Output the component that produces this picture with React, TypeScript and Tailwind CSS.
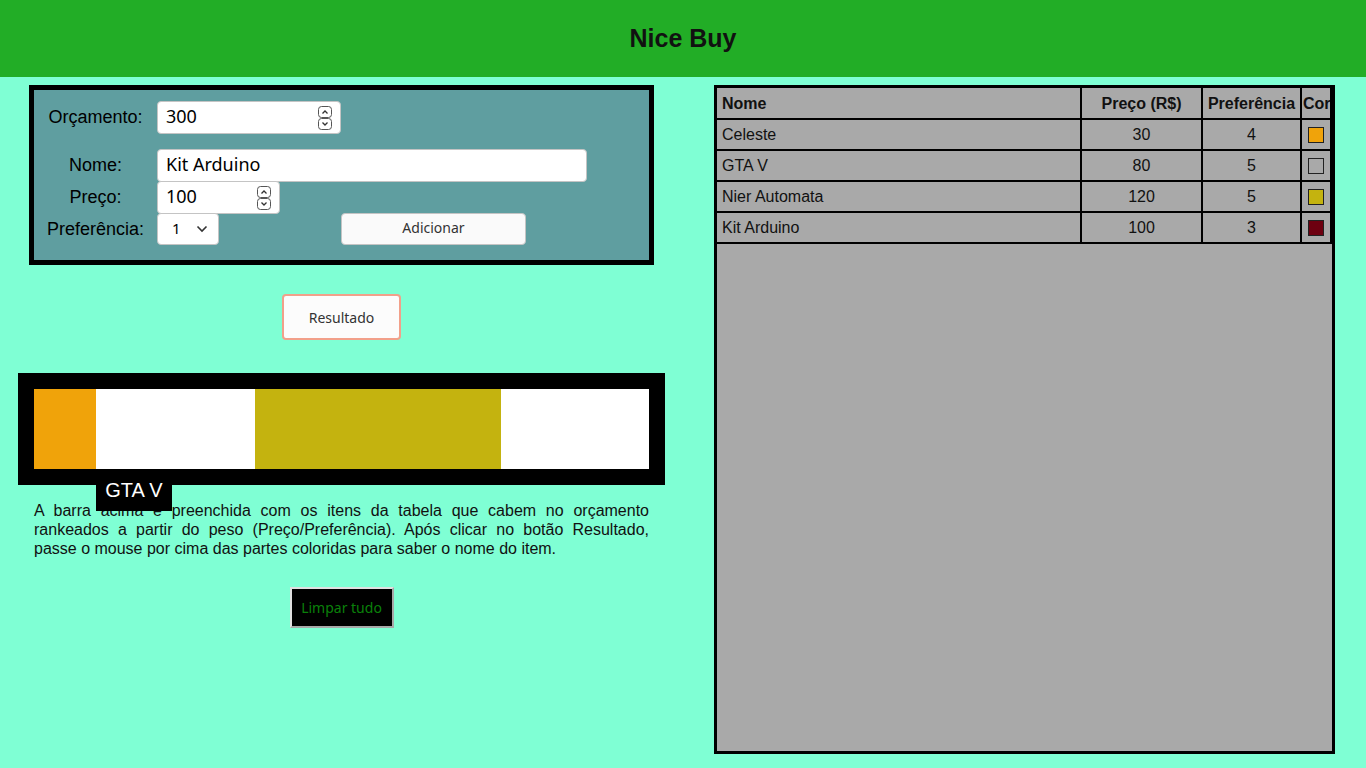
import React from "react";

const Spinner = () => (
  <svg width="14" height="24" viewBox="0 0 14 24" className="absolute top-1/2 -translate-y-1/2" style={{ right: 9 }}>
    <rect x="0.5" y="0.5" width="13" height="11" rx="3" fill="#fff" stroke="#555" />
    <rect x="0.5" y="12.5" width="13" height="11" rx="3" fill="#fff" stroke="#555" />
    <path d="M4.5 7.5 L7 5 L9.5 7.5" fill="none" stroke="#333" strokeWidth="1.3" />
    <path d="M4.5 16.5 L7 19 L9.5 16.5" fill="none" stroke="#333" strokeWidth="1.3" />
  </svg>
);

const inputCls =
  "h-full w-full rounded-[4px] border border-[#c4c4c4] bg-white pl-[8px] pb-[4px] text-[18px] text-black outline-none";

const rows = [
  { nome: "Celeste", preco: "30", pref: "4", cor: "#f0a30a" },
  { nome: "GTA V", preco: "80", pref: "5", cor: "transparent" },
  { nome: "Nier Automata", preco: "120", pref: "5", cor: "#c4b30f" },
  { nome: "Kit Arduino", preco: "100", pref: "3", cor: "#6d0010" },
];

export default function App() {
  const ui = { fontFamily: '"Noto Sans", "Open Sans", sans-serif' };
  return (
    <div className="min-h-[768px] w-[1366px] bg-[#7fffd4] text-black" style={{ fontFamily: '"Liberation Sans", Arial, sans-serif' }}>
      <header className="flex h-[77px] items-center justify-center bg-[#22ad26]">
        <h1 className="text-[25px] font-bold text-[#111]">Nice Buy</h1>
      </header>
      <main className="flex">
        {/* Left column */}
        <section className="flex w-[683px] flex-col items-center pt-[8px]">
          <div className="h-[180px] w-[625px] border-[5px] border-black bg-[#5f9ea0] pt-[11px] text-[18px]">
            <div className="flex h-[33px] items-center">
              <label className="w-[123px] text-center">Orçamento:</label>
              <div className="relative h-full w-[184px]">
                <input readOnly value="300" className={inputCls} style={ui} />
                <Spinner />
              </div>
            </div>
            <div className="mt-[15px] flex h-[33px] items-center">
              <label className="w-[123px] text-center">Nome:</label>
              <div className="h-full w-[430px]">
                <input readOnly value="Kit Arduino" className={inputCls} style={ui} />
              </div>
            </div>
            <div className="mt-[-1px] flex h-[33px] items-center">
              <label className="w-[123px] text-center">Preço:</label>
              <div className="relative h-full w-[123px]">
                <input readOnly value="100" className={inputCls} style={ui} />
                <Spinner />
              </div>
            </div>
            <div className="mt-[-1px] flex h-[32px] items-center">
              <label className="w-[123px] text-center">Preferência:</label>
              <div className="relative flex h-full w-[62px] items-center rounded-[4px] border border-[#c4c4c4] bg-white pb-[2px] pl-[14px] text-[15px]" style={ui}>
                <span>1</span>
                <svg width="12" height="8" viewBox="0 0 12 8" className="absolute left-[38px] top-[11px]">
                  <path d="M1.5 1.5 L6 6 L10.5 1.5" fill="none" stroke="#333" strokeWidth="1.6" />
                </svg>
              </div>
              <button className="ml-[122px] h-full w-[185px] rounded-[4px] border border-[#c4c4c4] bg-[#fafafa] pb-[3px] text-[14px] text-[#333]" style={ui}>
                Adicionar
              </button>
            </div>
          </div>

          <button className="mt-[29px] h-[46px] w-[119px] rounded-[4px] border-2 border-[#f2a08a] bg-[#fcfcfc] text-[14px] text-[#333]" style={ui}>
            Resultado
          </button>

          <div className="relative mt-[33px] h-[112px] w-[647px] bg-black p-[16px]">
            <div className="flex h-[80px] w-[615px]">
              <div className="h-full w-[62px] bg-[#f0a30a]" />
              <div className="h-full w-[159px] bg-white" />
              <div className="h-full w-[246px] bg-[#c4b30f]" />
              <div className="h-full flex-1 bg-white" />
            </div>
            <div className="absolute left-[78px] top-[100px] z-10 flex h-[38px] w-[76px] justify-center bg-black pt-[6px] text-[20px] leading-[23px] text-white">
              GTA V
            </div>
          </div>

          <p className="mt-[16px] w-[615px] text-justify text-[16px] leading-[19px] text-[#111]">
            <span className="block text-justify [text-align-last:justify]">
              A barra acima é preenchida com os itens da tabela que cabem no orçamento
            </span>
            <span className="block text-justify [text-align-last:justify]">
              rankeados a partir do peso (Preço/Preferência). Após clicar no botão Resultado,
            </span>
            <span className="block">passe o mouse por cima das partes coloridas para saber o nome do item.</span>
          </p>

          <button
            className="mt-[29px] h-[41px] w-[104px] border-2 border-t-[#e0e0e0] border-l-[#e0e0e0] border-r-[#a8a8a8] border-b-[#a8a8a8] bg-black pb-[1px] text-[14px] text-[#0a800a]"
            style={ui}
          >
            Limpar tudo
          </button>
        </section>

        {/* Right column */}
        <section className="flex w-[683px] justify-center pt-[8px]">
          <div className="h-[669px] w-[621px] overflow-hidden border-[3px] border-black bg-[#a9a9a9]">
            <div className="grid grid-cols-[365px_121px_99px_30px] text-[16px] text-[#111]">
              <div className="flex h-[32px] items-center border-b-2 border-r-2 border-black pl-[5px] pt-[1px] font-bold">Nome</div>
              <div className="flex h-[32px] items-center justify-center border-b-2 border-r-2 border-black pt-[1px] font-bold">Preço (R$)</div>
              <div className="flex h-[32px] items-center justify-center border-b-2 border-r-2 border-black pt-[1px] font-bold">Preferência</div>
              <div className="flex h-[32px] items-center overflow-hidden whitespace-nowrap border-b-2 border-r-2 border-black pl-[1px] pt-[1px] font-bold">Cor</div>
              {rows.map((r) => (
                <React.Fragment key={r.nome}>
                  <div className="flex h-[31px] items-center border-b-2 border-r-2 border-black pl-[5px]">{r.nome}</div>
                  <div className="flex h-[31px] items-center justify-center border-b-2 border-r-2 border-black">{r.preco}</div>
                  <div className="flex h-[31px] items-center justify-center border-b-2 border-r-2 border-black">{r.pref}</div>
                  <div className="flex h-[31px] items-center justify-center border-b-2 border-r-2 border-black">
                    <div className="h-[16px] w-[16px] border border-[#222]" style={{ backgroundColor: r.cor }} />
                  </div>
                </React.Fragment>
              ))}
            </div>
          </div>
        </section>
      </main>
    </div>
  );
}
